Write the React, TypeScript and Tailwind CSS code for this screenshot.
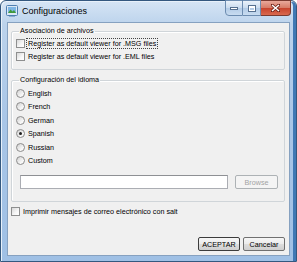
const langs = ["English", "French", "German", "Spanish", "Russian", "Custom"];

function Check({ label, focus }: { label: string; focus?: boolean }) {
  return (
    <div className="flex items-center h-[13px] gap-[3px]">
      <span className="w-[9px] h-[9px] shrink-0 border border-[#8e8f8f] bg-[linear-gradient(135deg,#d8d8d8,#f7f7f7_60%,#ffffff)]" />
      <span
        className={
          focus
            ? "border border-dotted border-[#444] px-[1px] leading-[9px] -ml-[2px]"
            : "leading-[9px]"
        }
      >
        {label}
      </span>
    </div>
  );
}

function Radio({ label, checked }: { label: string; checked?: boolean }) {
  return (
    <div className="flex items-center h-[13.5px] gap-[3px]">
      <span className="w-[9px] h-[9px] shrink-0 rounded-full border border-[#8b8b8b] bg-[linear-gradient(135deg,#d0d0d0,#f8f8f8_70%)] flex items-center justify-center">
        {checked && <span className="w-[3px] h-[3px] rounded-full bg-[#1f1f1f]" />}
      </span>
      <span className="leading-[9px]">{label}</span>
    </div>
  );
}

function AppIcon() {
  return (
    <svg width="12" height="12" viewBox="0 0 12 12" className="shrink-0">
      <rect x="0.5" y="0.5" width="11" height="10" rx="1" fill="#dbe8f5" stroke="#4f7fb0" />
      <rect x="2" y="2" width="8" height="6" fill="#7fb6e4" />
      <path d="M2 8 L4.5 4.5 L6.5 6.5 L8 5 L10 8 Z" fill="#3f9a3a" />
      <rect x="3" y="10" width="6" height="1.5" fill="#4f7fb0" />
    </svg>
  );
}

export default function App() {
  return (
    <div className="w-[297px] h-[262px] font-['Liberation_Sans',Arial,sans-serif] text-[7.2px] text-black bg-white">
      <div className="w-[297px] h-[262px] border border-[#34587f] rounded-t-[6px] bg-[linear-gradient(180deg,#d6e5f5_0%,#bcd3ec_9%,#a9c6e7_45%,#9fc0e5_100%)] shadow-[inset_1px_1px_0_#e8f1fa,inset_-3px_0_0_#3f78b4] flex flex-col">
        {/* title bar */}
        <div className="h-[21px] flex items-start">
          <div className="flex items-center gap-[4px] pl-[5px] pt-[4px]">
            <AppIcon />
            <span className="text-[9px] leading-[12px] text-black">Configuraciones</span>
          </div>
          <div className="ml-auto mr-[5px] flex h-[16px] -mt-[1px]">
            <div className="w-[18px] h-[16px] rounded-bl-[4px] border border-[#6c8cb0] bg-[linear-gradient(180deg,#eaf2fa,#c9dbee_50%,#b2cbe6_51%,#c8dcf0)] flex items-end justify-center pb-[5px]">
              <span className="w-[6px] h-[1px] bg-white border border-[#56708f] box-content" />
            </div>
            <div className="w-[18px] h-[16px] border border-l-0 border-[#6c8cb0] bg-[linear-gradient(180deg,#eaf2fa,#c9dbee_50%,#b2cbe6_51%,#c8dcf0)] flex items-center justify-center">
              <span className="w-[6px] h-[5px] border border-t-[2px] border-white shadow-[0_0_0_1px_#56708f]" />
            </div>
            <div className="w-[30px] h-[16px] rounded-br-[4px] border border-l-0 border-[#7a3a30] bg-[linear-gradient(180deg,#e9a99b,#d67a65_50%,#c7432c_51%,#d9694f)] flex items-center justify-center">
              <svg width="9" height="8" viewBox="0 0 9 8">
                <path d="M1 1 L8 7 M8 1 L1 7" stroke="#6b2016" strokeWidth="3" strokeLinecap="square" />
                <path d="M1 1 L8 7 M8 1 L1 7" stroke="#ffffff" strokeWidth="1.6" />
              </svg>
            </div>
          </div>
        </div>

        {/* client area */}
        <div className="ml-[6px] w-[283px] h-[234px] border border-[#86a1c0] bg-[#f0f0f0] flex flex-col pl-[3px] pr-[4px]">
          <fieldset className="mt-[3px] w-[274px] border border-[#d0d5d9] rounded-[2px] shadow-[inset_1px_1px_0_#ffffff] pl-[4px] pb-[6px]">
            <legend className="ml-[3px] px-[1px] leading-[10px]">Asociación de archivos</legend>
            <div className="mt-[1px]">
              <Check label="Register as default viewer for .MSG files" focus />
              <Check label="Register as default viewer for .EML files" />
            </div>
          </fieldset>

          <fieldset className="mt-[5px] w-[274px] border border-[#d0d5d9] rounded-[2px] shadow-[inset_1px_1px_0_#ffffff] pl-[4px] pb-[12px]">
            <legend className="ml-[3px] px-[1px] leading-[10px]">Configuración del idioma</legend>
            <div className="mt-[1.25px]">
              {langs.map((l) => (
                <Radio key={l} label={l} checked={l === "Spanish"} />
              ))}
            </div>
            <div className="mt-[7.75px] ml-[4px] flex gap-[7px]">
              <div className="w-[208px] h-[14px] bg-white border border-[#abadb3] border-t-[#8e9094]" />
              <div className="w-[43px] h-[14px] border border-[#adb2b5] rounded-[2px] bg-[#f4f4f4] text-[#a3a3a3] flex items-center justify-center leading-[9px]">
                Browse
              </div>
            </div>
          </fieldset>

          <div className="mt-[2.5px]">
            <Check label="Imprimir mensajes de correo electrónico con salt" />
          </div>

          <div className="mt-[19.5px] flex justify-end gap-[3px]">
            <div className="w-[42px] h-[14px] border border-[#3c3c3c] rounded-[2px] bg-[linear-gradient(180deg,#f6f6f6,#ebebeb_50%,#dddddd_51%,#cfcfcf)] flex items-center justify-center leading-[9px]">
              ACEPTAR
            </div>
            <div className="w-[42px] h-[14px] border border-[#707070] rounded-[2px] bg-[linear-gradient(180deg,#f6f6f6,#ebebeb_50%,#dddddd_51%,#cfcfcf)] flex items-center justify-center leading-[9px]">
              Cancelar
            </div>
          </div>
        </div>
      </div>
    </div>
  );
}
